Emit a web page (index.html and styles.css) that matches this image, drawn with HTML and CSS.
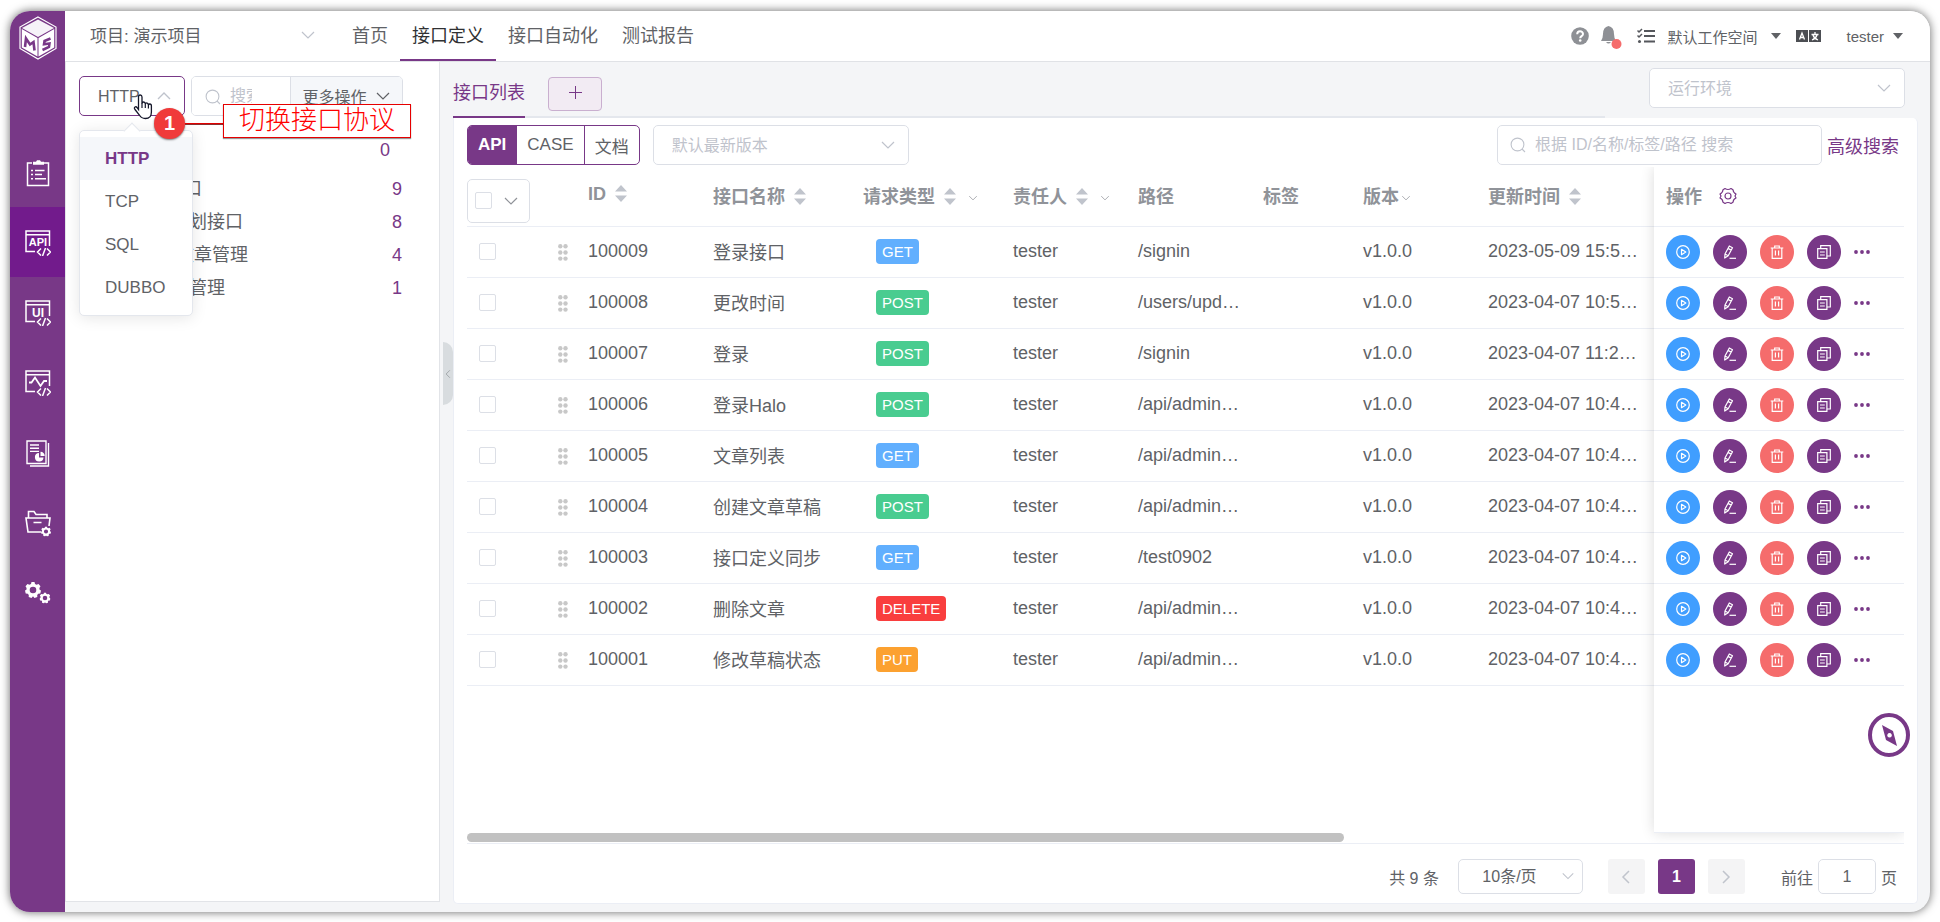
FILE: index.html
```html
<!DOCTYPE html>
<html lang="zh-CN">
<head>
    <meta charset="UTF-8">
    <meta name="viewport" content="width=device-width, initial-scale=1.0">
    <title>接口定义</title>
    <link rel="stylesheet" href="styles.css">
</head>
<body>
    <!-- Icon sprite -->
    <svg class="sprite" aria-hidden="true">
        <symbol id="i-down" viewBox="0 0 16 16"><path d="M2 5l6 6 6-6" fill="none" stroke="currentColor" stroke-width="1.2"/></symbol>
        <symbol id="i-up" viewBox="0 0 16 16"><path d="M2 11l6-6 6 6" fill="none" stroke="currentColor" stroke-width="1.4"/></symbol>
        <symbol id="i-left" viewBox="0 0 16 16"><path d="M11 2L5 8l6 6" fill="none" stroke="currentColor" stroke-width="1.5"/></symbol>
        <symbol id="i-right" viewBox="0 0 16 16"><path d="M5 2l6 6-6 6" fill="none" stroke="currentColor" stroke-width="1.5"/></symbol>
        <symbol id="i-search" viewBox="0 0 16 16"><g fill="none" stroke="currentColor" stroke-width="1.1"><circle cx="7.5" cy="7.5" r="6.4"/><path d="M12 12l3 3"/></g></symbol>
        <symbol id="i-sort" viewBox="0 0 12 17"><path d="M6 0l6 6.500H0zM6 17l6-6.500H0z" fill="currentColor"/></symbol>
        <symbol id="i-caret" viewBox="0 0 10 6"><path d="M0 0h10L5 6z" fill="currentColor"/></symbol>
        <symbol id="i-drag" viewBox="0 0 10 17"><g fill="currentColor"><circle cx="2.300" cy="2.300" r="2.200"/><circle cx="7.500" cy="2.300" r="2.200"/><circle cx="2.300" cy="8.500" r="2.200"/><circle cx="7.500" cy="8.500" r="2.200"/><circle cx="2.300" cy="14.600" r="2.200"/><circle cx="7.500" cy="14.600" r="2.200"/></g></symbol>
        <symbol id="i-play" viewBox="0 0 14 14"><g fill="none" stroke="currentColor" stroke-width="1.2"><circle cx="7" cy="7" r="6.300"/><path d="M5.500 4.300v5.400L9.800 7z" stroke-linejoin="round"/></g></symbol>
        <symbol id="i-edit" viewBox="0 0 14 14"><g fill="none" stroke="currentColor" stroke-width="1.2" stroke-linejoin="round"><path d="M6.300 1l3.200 1.700-4.300 8L1.700 13l.3-4zM5 3.400l3.200 1.700M2 9l3.200 1.700"/><path d="M6.500 13.300H13"/></g></symbol>
        <symbol id="i-trash" viewBox="0 0 14 14"><path d="M.7 3h12.600M4.700 3V1h4.600v2M2.200 3v10.300h9.600V3M5.400 5.500v5M8.600 5.500v5" fill="none" stroke="currentColor" stroke-width="1.200"/></symbol>
        <symbol id="i-copy" viewBox="0 0 14 14"><path d="M.7 3.700h9.200v9.600H.7zM3.700 3.500V.7h9.600V11h-3.200M3 7h4.800M3 10h4.800" fill="none" stroke="currentColor" stroke-width="1.200"/></symbol>
        <symbol id="i-more" viewBox="0 0 16 4"><g fill="currentColor"><circle cx="2" cy="2" r="1.900"/><circle cx="8" cy="2" r="1.900"/><circle cx="14" cy="2" r="1.900"/></g></symbol>
        <symbol id="i-setting" viewBox="0 0 18 18"><g fill="none" stroke="currentColor" stroke-width="1.200" stroke-linejoin="round"><path d="M6 1.500q3 2 6 0l2 1.300q.2 3 3 4.200l-1 2 1 2q-2.800 1.200-3 4.200l-2 1.300q-3-2-6 0l-2-1.300q-.2-3-3-4.200l1-2-1-2q2.800-1.200 3-4.200z"/><circle cx="9" cy="9" r="3"/></g></symbol>
        <symbol id="i-window" viewBox="0 0 26 26"><g fill="none" stroke="currentColor" stroke-width="1.500"><path d="M10 21.500H1V1h23.500v15M1 4.800h23.500"/><path d="M16 18.500L12.500 22l3.500 3.500M22 18.500l3.500 3.500-3.500 3.500M20.500 18l-3 8"/></g></symbol>
        <symbol id="i-gear" viewBox="0 0 16 16"><path d="M6.500 0h3l.5 2 1.600.7L13.500 2l2 2.300-1.100 1.800.2 1.600 1.400.9-.7 2.900-2.100.2-1 1.300.1 2-2.800 1L8 14.300 6.500 16l-2.800-1 .1-2-1-1.300-2.100-.2L0 8.600l1.400-.9.2-1.600L.5 4.300 2.500 2l1.900.7L6 2zM8 4.700A3.300 3.300 0 1 0 8 11.300 3.300 3.300 0 1 0 8 4.700z" fill="currentColor" fill-rule="evenodd"/></symbol>
    </svg>

    <div class="window">
        <nav class="sidebar" aria-label="主菜单">
            <a class="logo" href="#" aria-label="MS">
                <svg width="38" height="44" viewBox="0 0 38 44">
                    <path d="M19 1l18 10v21.500L19 43 1 32.500V11z" fill="none" stroke="#fff" stroke-width="1.200"/>
                    <path d="M19 3.500L35 12 19 21 3 12z" fill="#f6f3f8"/>
                    <path d="M2.800 13L18.500 22v18.500L2.800 31.500zM35.200 13L19.500 22v18.500l15.700-9z" fill="#fff"/>
                    <path d="M6 31l1-8.500 4 6 3.500-2.500 1 8.500" fill="none" stroke="#783887" stroke-width="2.600"/>
                    <path d="M31.500 22.500l-6 2.500-.5 3.200 5.500-.7-.5 3.500-6.500 3" fill="none" stroke="#783887" stroke-width="2.500"/>
                </svg>
            </a>
            <a class="side-item" href="#" aria-label="测试跟踪">
                <svg width="24" height="27" viewBox="0 0 24 27"><path d="M6 3H1.500v22.500h21V3H18M5 10.500h2M9 10.500h9.500M5 14.500h2M9 14.500h7M5 18.800h2M9 18.800h11" fill="none" stroke="currentColor" stroke-width="1.500"/><path d="M7 1.800h3l1-1.500h3l1 1.500h3v3H7z" fill="currentColor"/></svg>
            </a>
            <a class="side-item active" href="#" aria-label="接口测试">
                <svg width="26" height="27" viewBox="0 0 26 27"><use href="#i-window" width="26" height="26"/><text class="icon-text" x="13" y="16" font-size="11">API</text></svg>
            </a>
            <a class="side-item" href="#" aria-label="UI 测试">
                <svg width="26" height="27" viewBox="0 0 26 27"><use href="#i-window" width="26" height="26"/><text class="icon-text" x="13" y="17" font-size="12">UI</text></svg>
            </a>
            <a class="side-item" href="#" aria-label="性能测试">
                <svg width="26" height="27" viewBox="0 0 26 27"><use href="#i-window" width="26" height="26"/><path d="M4 12.500h2.500l3.500-5 5.500 8.500 3.500-5h3" fill="none" stroke="currentColor" stroke-width="1.800"/></svg>
            </a>
            <a class="side-item" href="#" aria-label="报告统计">
                <svg width="24" height="27" viewBox="0 0 24 27"><path d="M1 1h19v22.500H1zM22.500 3v23H4M4 5h9M4 8.200h9M4 11.400h9" fill="none" stroke="currentColor" stroke-width="1.400"/><path d="M13 13a4.300 4.300 0 1 0 4.500 4.500H13z" fill="currentColor"/><path d="M14.500 11.800v4.200h4.200a4.200 4.200 0 0 0-4.200-4.200z" fill="currentColor"/></svg>
            </a>
            <a class="side-item" href="#" aria-label="项目设置">
                <svg width="26" height="27" viewBox="0 0 26 27"><path d="M3.500 8V1.500h5.500l2 3h11V8M16 22H3L1 8h24l-1 8M8.500 12.500h8" fill="none" stroke="currentColor" stroke-width="1.600"/><use href="#i-gear" x="16" y="16.500" width="10" height="10"/></svg>
            </a>
            <a class="side-item" href="#" aria-label="系统设置">
                <svg width="26" height="22" viewBox="0 0 26 22"><use href="#i-gear" x="0" y="0" width="16" height="16"/><use href="#i-gear" x="14.500" y="10.500" width="11" height="11"/></svg>
            </a>
        </nav>

        <div class="main">
            <header class="header">
                <div class="select project-select">
                    <select aria-label="项目"><option>项目: 演示项目</option></select>
                    <svg class="arrow"><use href="#i-down"/></svg>
                </div>
                <nav class="nav">
                    <a href="#">首页</a>
                    <a href="#" class="active">接口定义</a>
                    <a href="#">接口自动化</a>
                    <a href="#">测试报告</a>
                </nav>
                <div class="header-tools">
                    <button class="icon-btn help" aria-label="帮助"><svg width="18" height="18" viewBox="0 0 18 18"><circle cx="9" cy="9" r="8.800" fill="#8e9095"/><path d="M6.200 7.200C6.200 3.300 12 3.500 12 7c0 2.200-2.800 2.100-2.800 4.200" fill="none" stroke="#fff" stroke-width="2"/><circle cx="9.200" cy="13.500" r="1.300" fill="#fff"/></svg></button>
                    <button class="icon-btn bell" aria-label="消息"><svg width="22" height="26" viewBox="0 0 22 26"><path d="M7.500 3q5.500 1 5.500 8 0 4 2 7H0q2-3 2-7 0-7 5.500-8zM5 19h5q-2.500 3-5 0" fill="#8e9095"/><circle cx="15.500" cy="21" r="5" fill="#f56c6c"/></svg></button>
                    <button class="icon-btn tasks" aria-label="任务"><svg width="18" height="16" viewBox="0 0 18 16"><path d="M7 3h11M7 8h11M7 13.500h11" stroke="#55575c" stroke-width="2"/><path d="M.5 2.500L2 4l3-3M.5 7.500L2 9l3-3" fill="none" stroke="#55575c" stroke-width="1.500"/><circle cx="2.500" cy="13.500" r="1.500" fill="#55575c"/></svg></button>
                    <button class="text-btn workspace">默认工作空间 <svg width="10" height="6"><use href="#i-caret"/></svg></button>
                    <button class="icon-btn lang" aria-label="语言"><svg width="25" height="14" viewBox="0 0 25 14"><path d="M0 1h12v12H0zM13 1h12v12H13z" fill="#4c4e53"/><path d="M3.500 10.500L6 4l2.500 6.500M4.500 8.500h3M19 3v2M15.500 5.500h7M17 6q1 3.500 5 5M21 6q-1 3.500-5 5" fill="none" stroke="#fff" stroke-width="1.300"/></svg></button>
                    <button class="text-btn user">tester <svg width="10" height="6"><use href="#i-caret"/></svg></button>
                </div>
            </header>

            <div class="body">
                <aside class="aside">
                    <div class="aside-bar">
                        <div class="select protocol">
                            <select aria-label="协议">
                                <option>HTTP</option>
                                <option>TCP</option>
                                <option>SQL</option>
                                <option>DUBBO</option>
                            </select>
                            <svg class="arrow"><use href="#i-up"/></svg>
                            <ul class="dropdown">
                                <li class="selected">HTTP</li>
                                <li>TCP</li>
                                <li>SQL</li>
                                <li>DUBBO</li>
                            </ul>
                            <svg class="pointer" width="20" height="26" viewBox="0 0 20 26"><path d="M5.500 15.500V3q0-2 1.700-2T9 3v6.500q.2-1.500 1.700-1.500t1.600 2q.3-1.200 1.500-1.200T15.400 11q.3-1 1.400-1 1.600 0 1.600 2v6q0 6.500-6 6.500-4 0-6-3.500L2 15.500q-1.200-1.800 0-2.500t2.300.8z" fill="#fff" stroke="#15172a" stroke-width="1.300"/><path d="M9 9v5M12.300 10v4M15.400 11v3.500" stroke="#15172a" stroke-width="1.200"/></svg>
                            <span class="step-badge">1</span>
                            <span class="step-line"></span>
                            <span class="step-note">切换接口协议</span>
                        </div>
                        <div class="search-group">
                            <svg class="search-icon"><use href="#i-search"/></svg>
                            <input type="text" placeholder="搜索" aria-label="搜索模块">
                            <button>更多操作 <svg class="icon"><use href="#i-down"/></svg></button>
                        </div>
                    </div>
                    <ul class="tree">
                        <li class="tree-total"><span></span><b>0</b></li>
                        <li class="level-1"><span>全部接口</span><b>9</b></li>
                        <li class="level-2"><span>未规划接口</span><b>8</b></li>
                        <li class="level-3"><span>文章管理</span><b>4</b></li>
                        <li class="level-2"><span>用户管理</span><b>1</b></li>
                    </ul>
                </aside>

                <section class="content">
                    <button class="splitter" aria-label="收起"><svg class="icon"><use href="#i-left"/></svg></button>
                    <div class="tabs-row">
                        <div class="tabs">
                            <a href="#" class="tab">接口列表</a>
                            <button class="add-tab" aria-label="新增"><svg width="13" height="13" viewBox="0 0 13 13"><path d="M6.500 0v13M0 6.500h13" stroke="currentColor"/></svg></button>
                        </div>
                        <div class="select env-select">
                            <select aria-label="运行环境" class="empty"><option>运行环境</option></select>
                            <svg class="arrow"><use href="#i-down"/></svg>
                        </div>
                    </div>

                    <div class="card">
                        <div class="toolbar">
                            <div class="view-switch">
                                <button class="on">API</button>
                                <button>CASE</button>
                                <button>文档</button>
                            </div>
                            <div class="select version-select">
                                <select aria-label="版本" class="empty"><option>默认最新版本</option></select>
                                <svg class="arrow"><use href="#i-down"/></svg>
                            </div>
                            <div class="search-box">
                                <svg class="search-icon"><use href="#i-search"/></svg>
                                <input type="text" placeholder="根据 ID/名称/标签/路径 搜索" aria-label="搜索接口">
                            </div>
                            <a href="#" class="advanced">高级搜索</a>
                        </div>

                        <div class="table-wrap">
                            <div class="table-area">
                                <div class="table-scroll">
                                    <table class="api-table">
                                        <colgroup>
                                            <col class="c-check"><col class="c-drag"><col class="c-id"><col class="c-name"><col class="c-type"><col class="c-owner"><col class="c-path"><col class="c-tag"><col class="c-version"><col class="c-time">
                                        </colgroup>
                                        <thead>
                                            <tr>
                                                <th class="check-head"><div class="check-all"><input type="checkbox" aria-label="全选"><svg class="icon"><use href="#i-down"/></svg></div></th>
                                                <th></th>
                                                <th>ID<svg class="sort"><use href="#i-sort"/></svg></th>
                                                <th>接口名称<svg class="sort"><use href="#i-sort"/></svg></th>
                                                <th>请求类型<svg class="sort"><use href="#i-sort"/></svg><svg class="filter"><use href="#i-down"/></svg></th>
                                                <th>责任人<svg class="sort"><use href="#i-sort"/></svg><svg class="filter"><use href="#i-down"/></svg></th>
                                                <th>路径</th>
                                                <th>标签</th>
                                                <th>版本<svg class="filter close"><use href="#i-down"/></svg></th>
                                                <th>更新时间<svg class="sort"><use href="#i-sort"/></svg></th>
                                            </tr>
                                        </thead>
                                        <tbody id="apiRows"></tbody>
                                    </table>
                                </div>
                                <div class="fixed-panel">
                                    <table class="api-table">
                                        <thead>
                                            <tr><th>操作<svg class="setting"><use href="#i-setting"/></svg></th></tr>
                                        </thead>
                                        <tbody id="actionRows"></tbody>
                                    </table>
                                </div>
                            </div>
                            <div class="scrollbar"><div class="thumb"></div></div>
                        </div>

                        <div class="pagination">
                            <span class="total">共 9 条</span>
                            <div class="select page-size">
                                <select aria-label="每页条数"><option>10条/页</option></select>
                                <svg class="arrow"><use href="#i-down"/></svg>
                            </div>
                            <button class="page" disabled aria-label="上一页"><svg class="icon"><use href="#i-left"/></svg></button>
                            <button class="page current">1</button>
                            <button class="page" disabled aria-label="下一页"><svg class="icon"><use href="#i-right"/></svg></button>
                            <label class="jump">前往 <input type="text" value="1"> 页</label>
                        </div>
                    </div>
                    <button class="compass" aria-label="新手引导"><svg width="42" height="44" viewBox="0 0 42 44"><ellipse cx="21" cy="22" rx="19" ry="20" fill="#fff" stroke="#783887" stroke-width="4"/><path d="M14 12l11 6 4 15-11-6zM21.500 20a2.300 2.300 0 1 0 .1 0z" fill="#783887" fill-rule="evenodd"/></svg></button>
                </section>
            </div>
        </div>
    </div>

    <script>
const apis = [
    { id: '100009', name: '登录接口', method: 'GET', path: '/signin', time: '2023-05-09 15:53:20' },
    { id: '100008', name: '更改时间', method: 'POST', path: '/users/update', time: '2023-04-07 10:52:10' },
    { id: '100007', name: '登录', method: 'POST', path: '/signin', time: '2023-04-07 11:22:10' },
    { id: '100006', name: '登录Halo', method: 'POST', path: '/api/admin/login', time: '2023-04-07 10:42:10' },
    { id: '100005', name: '文章列表', method: 'GET', path: '/api/admin/posts', time: '2023-04-07 10:42:10' },
    { id: '100004', name: '创建文章草稿', method: 'POST', path: '/api/admin/posts', time: '2023-04-07 10:42:10' },
    { id: '100003', name: '接口定义同步', method: 'GET', path: '/test0902', time: '2023-04-07 10:42:10' },
    { id: '100002', name: '删除文章', method: 'DELETE', path: '/api/admin/posts', time: '2023-04-07 10:42:10' },
    { id: '100001', name: '修改草稿状态', method: 'PUT', path: '/api/admin/posts', time: '2023-04-07 10:42:10' }
];

// Render the scrolling columns and the fixed action column
document.getElementById('apiRows').innerHTML = apis.map(api => `
    <tr>
        <td class="check-cell"><input type="checkbox" aria-label="选择 ${api.id}"></td>
        <td class="drag-cell"><svg class="drag"><use href="#i-drag"/></svg></td>
        <td>${api.id}</td>
        <td>${api.name}</td>
        <td><span class="method ${api.method.toLowerCase()}">${api.method}</span></td>
        <td>tester</td>
        <td>${api.path}</td>
        <td></td>
        <td>v1.0.0</td>
        <td>${api.time}</td>
    </tr>`).join('');

document.getElementById('actionRows').innerHTML = apis.map(() => `
    <tr>
        <td><div class="actions">
            <button class="round run" aria-label="执行"><svg><use href="#i-play"/></svg></button>
            <button class="round" aria-label="编辑"><svg><use href="#i-edit"/></svg></button>
            <button class="round remove" aria-label="删除"><svg><use href="#i-trash"/></svg></button>
            <button class="round" aria-label="复制"><svg><use href="#i-copy"/></svg></button>
            <button class="more" aria-label="更多"><svg><use href="#i-more"/></svg></button>
        </div></td>
    </tr>`).join('');
    </script>
</body>
</html>
```
FILE: styles.css
```css
* {
    box-sizing: border-box;
}

body {
    margin: 0;
    height: 100vh;
    padding: 11px 10px 10px;
    background: #fff;
    color: #606266;
    font-family: "Liberation Sans", "Noto Sans CJK SC", sans-serif;
    font-size: 18px;
}

button, input, select {
    font-family: inherit;
    color: inherit;
    margin: 0;
}

button {
    border: none;
    background: none;
    padding: 0;
    cursor: pointer;
}

a {
    color: inherit;
    text-decoration: none;
}

ul {
    list-style: none;
    margin: 0;
    padding: 0;
}

.sprite {
    display: none;
}

.icon {
    width: 16px;
    height: 16px;
}

/* Window frame */
.window {
    display: flex;
    height: 100%;
    border-radius: 20px;
    overflow: hidden;
    background: #f4f5f7;
    box-shadow: 0 0 10px rgba(0, 0, 0, 0.6);
}

.main {
    flex: 1;
    min-width: 0;
    display: flex;
    flex-direction: column;
}

/* Sidebar */
.sidebar {
    width: 55px;
    background: #783887;
    color: #fff;
}

.logo {
    display: flex;
    justify-content: center;
    height: 126px;
    padding-top: 5px;
}

.side-item {
    display: flex;
    align-items: center;
    justify-content: center;
    height: 70px;
    padding-top: 2px;
}

.side-item.active {
    background: #721b8c;
}

.icon-text {
    fill: #fff;
    font-weight: bold;
    text-anchor: middle;
}

/* Header */
.header {
    display: flex;
    height: 51px;
    background: #fff;
    border-bottom: 1px solid #e0e2e6;
}

/* Select boxes */
.select {
    position: relative;
    height: 40px;
}

.select select {
    appearance: none;
    width: 100%;
    height: 100%;
    padding: 0 18px;
    border: 1px solid #dcdfe6;
    border-radius: 5px;
    background: #fff;
    font-size: 16px;
}

.select select.empty {
    color: #bfc3cc;
}

.select .arrow {
    position: absolute;
    right: 13px;
    top: 12px;
    width: 16px;
    height: 16px;
    color: #bfc3cc;
    pointer-events: none;
}

.select.project-select {
    width: 264px;
    height: 50px;
    margin-right: 11px;
}

.project-select select {
    border: none;
    padding-left: 25px;
    font-size: 17px;
}

.project-select .arrow {
    top: 16px;
}

.nav {
    display: flex;
}

.nav a {
    padding: 0 12px;
    line-height: 50px;
}

.nav a.active {
    color: #303133;
    box-shadow: inset 0 -2px #783887;
}

.header-tools {
    display: flex;
    align-items: center;
    margin-left: auto;
    padding-right: 27px;
}

.icon-btn, .text-btn {
    display: flex;
    align-items: center;
}

.text-btn {
    gap: 14px;
    font-size: 15px;
}

.help {
    margin-right: 12px;
}

.tasks {
    margin: 0 12px 0 14px;
}

.lang {
    margin: 0 25px 0 15px;
}

.user {
    gap: 9px;
}

/* Module panel */
.body {
    flex: 1;
    display: flex;
    min-height: 0;
}

.aside {
    width: 375px;
    margin-bottom: 10px;
    padding: 14px 36px 0 13px;
    background: #fff;
    border: 1px solid #e2e4e8;
    border-top: none;
}

.aside-bar {
    display: flex;
    gap: 6px;
}

.protocol {
    width: 106px;
    z-index: 2;
}

.protocol select {
    border-color: #783887;
}

.search-group {
    position: relative;
    flex: 1;
    display: flex;
    height: 40px;
    border: 1px solid #dcdfe6;
    border-radius: 5px;
    overflow: hidden;
}

.search-group input {
    flex: 1;
    min-width: 0;
    padding: 0 38px;
    border: none;
    font-size: 16px;
}

.search-group button {
    display: flex;
    align-items: center;
    justify-content: center;
    gap: 8px;
    width: 112px;
    border-left: 1px solid #dcdfe6;
    background: #f5f7fa;
    font-size: 16px;
}

.search-icon {
    position: absolute;
    left: 13px;
    top: 12px;
    width: 16px;
    height: 16px;
    color: #bfc3cc;
}

input::placeholder {
    color: #bfc3cc;
}

/* Protocol dropdown */
.dropdown {
    position: absolute;
    left: 0;
    top: 54px;
    width: 114px;
    padding: 6px 0;
    background: #fff;
    border: 1px solid #e4e7ed;
    border-radius: 5px;
    box-shadow: 0 2px 15px rgba(0, 0, 0, 0.1);
    font-size: 17px;
}

.dropdown::before {
    content: "";
    position: absolute;
    left: 46px;
    top: -6px;
    width: 11px;
    height: 11px;
    background: #fff;
    border: 1px solid #e4e7ed;
    border-width: 1px 0 0 1px;
    transform: rotate(45deg);
}

.dropdown li {
    padding-left: 25px;
    line-height: 43px;
}

.dropdown .selected {
    position: relative;
    background: #f5f7fa;
    color: #783887;
    font-weight: bold;
}

/* Guide marks over the page */
.pointer {
    position: absolute;
    left: 54px;
    top: 18px;
}

.step-badge {
    position: absolute;
    left: 75px;
    top: 32px;
    width: 31px;
    height: 31px;
    border-radius: 50%;
    background: #f03a3a;
    color: #fff;
    font-size: 20px;
    font-weight: bold;
    line-height: 31px;
    text-align: center;
    box-shadow: 0 1px 2px rgba(0, 0, 0, 0.5);
}

.step-line {
    position: absolute;
    left: 106px;
    top: 47px;
    width: 38px;
    height: 1px;
    background: #e00000;
    box-shadow: 0 1px #8c3030;
}

.step-note {
    position: absolute;
    left: 144px;
    top: 28px;
    width: 188px;
    height: 34px;
    border: 1px solid #e60000;
    background: #fff;
    color: #f00;
    font-size: 26px;
    font-weight: 300;
    line-height: 30px;
    text-align: center;
    box-shadow: 0 1px 1px rgba(0, 0, 0, 0.4);
}

/* Module tree */
.tree {
    margin-top: 18px;
}

.tree li {
    display: flex;
    justify-content: space-between;
    line-height: 33px;
    padding-right: 1px;
}

.tree b {
    color: #783887;
    font-weight: normal;
}

.tree .tree-total {
    padding-right: 13px;
    margin-bottom: 6px;
}

.level-1 {
    padding-left: 51px;
}

.level-2 {
    padding-left: 74px;
}

.level-3 {
    padding-left: 97px;
}

/* Content */
.content {
    position: relative;
    flex: 1;
    min-width: 0;
    display: flex;
    flex-direction: column;
    padding: 0 12px 8px 13px;
}

.splitter {
    position: absolute;
    left: 3px;
    top: 280px;
    width: 10px;
    height: 63px;
    border-radius: 0 10px 10px 0;
    background: #d8dcdf;
    color: #a0a4a8;
}

.splitter .icon {
    display: block;
    width: 10px;
    height: 16px;
}

.tabs-row {
    display: flex;
    height: 56px;
}

.tabs {
    flex: 1;
    display: flex;
    align-items: flex-start;
    gap: 23px;
    border-bottom: 2px solid #e4e7ed;
}

.tab {
    height: 56px;
    line-height: 62px;
    border-bottom: 2px solid #783887;
    color: #783887;
}

.add-tab {
    width: 54px;
    height: 34px;
    margin-top: 15px;
    border: 1px solid #c9afcf;
    border-radius: 4px;
    background: #f2ebf3;
    color: #783887;
}

.env-select {
    width: 256px;
    margin: 6px 13px 0 44px;
}

.card {
    flex: 1;
    min-height: 0;
    display: flex;
    flex-direction: column;
    padding: 7px 13px 9px;
    background: #fff;
    border: 1px solid #ebeef5;
    border-top: none;
    border-radius: 0 5px 5px 5px;
}

.toolbar {
    display: flex;
    align-items: center;
    margin-bottom: 2px;
}

.view-switch {
    display: flex;
    height: 40px;
    border: 1px solid #783887;
    border-radius: 5px;
    overflow: hidden;
}

.view-switch button {
    padding: 0 10px;
    font-size: 17px;
}

.view-switch button + button {
    border-left: 1px solid #783887;
}

.view-switch .on {
    background: #783887;
    color: #fff;
    font-weight: bold;
}

.version-select {
    width: 256px;
    margin-left: 13px;
}

.search-box {
    position: relative;
    width: 325px;
    height: 40px;
    margin-left: auto;
}

.search-box input {
    width: 100%;
    height: 100%;
    padding: 0 37px;
    border: 1px solid #dcdfe6;
    border-radius: 5px;
    font-size: 16px;
}

.advanced {
    margin: 0 5px;
    color: #783887;
}

/* API table */
.table-wrap {
    flex: 1;
    min-height: 0;
    display: flex;
    flex-direction: column;
    overflow: hidden;
    border-bottom: 1px solid #ebeef5;
}

.table-area {
    flex: 1;
    display: flex;
}

.table-scroll {
    flex: 1;
    min-width: 0;
    overflow: hidden;
}

.fixed-panel {
    width: 250px;
    background: #fff;
    border-bottom: 1px solid #ebeef5;
    box-shadow: 0 0 13px rgba(0, 0, 0, 0.14);
    z-index: 1;
}

.api-table {
    width: 100%;
    table-layout: fixed;
    border-collapse: separate;
    border-spacing: 0;
}

.c-check { width: 83px; }
.c-drag { width: 26px; }
.c-id, .c-owner, .c-path, .c-version { width: 125px; }
.c-name, .c-type { width: 150px; }
.c-tag { width: 100px; }

.api-table th, .api-table td {
    padding: 0 8px 0 12px;
    border-bottom: 1px solid #ebeef5;
    text-align: left;
    white-space: nowrap;
    overflow: hidden;
    text-overflow: ellipsis;
}

.api-table th {
    height: 60px;
    padding-right: 0;
    padding-bottom: 4px;
    color: #909399;
}

.api-table td {
    height: 51px;
}

.table-scroll td {
    padding-bottom: 2px;
}

.api-table .check-head {
    padding: 8px 0 0;
}

.check-all {
    display: flex;
    align-items: center;
    gap: 11px;
    width: 63px;
    height: 44px;
    padding-left: 7px;
    border: 1px solid #dcdfe6;
    border-radius: 5px;
}

.api-table input {
    display: block;
    appearance: none;
    width: 17px;
    height: 17px;
    border: 1px solid #dcdfe6;
    border-radius: 2px;
    background: #fff;
}

.api-table .drag-cell {
    padding: 0 8px;
}

.drag {
    display: block;
    width: 10px;
    height: 17px;
    color: #c8c8c8;
}

.sort {
    width: 12px;
    height: 17px;
    margin-left: 9px;
    vertical-align: -2px;
    color: #c0c4cc;
}

.filter {
    width: 10px;
    height: 10px;
    margin-left: 12px;
}

.filter.close {
    margin-left: 2px;
}

.setting {
    width: 18px;
    height: 18px;
    margin-left: 17px;
    vertical-align: -2px;
    color: #783887;
}

.method {
    display: inline-block;
    margin-left: 13px;
    padding: 0 6px;
    border-radius: 4px;
    color: #fff;
    font-size: 15px;
    line-height: 25px;
    vertical-align: middle;
}

.get { background: #61affe; }
.post { background: #49cc90; }
.delete { background: #f93e3e; }
.put { background: #fca130; }

.actions {
    display: flex;
    align-items: center;
    gap: 13px;
}

.round {
    display: flex;
    align-items: center;
    justify-content: center;
    width: 34px;
    height: 34px;
    border-radius: 50%;
    background: #783887;
    color: #fff;
}

.round svg {
    width: 14px;
    height: 14px;
}

.run { background: #409eff; }
.remove { background: #f56c6c; }

.more {
    display: flex;
    color: #783887;
}

.more svg {
    width: 16px;
    height: 4px;
}

.scrollbar {
    height: 10px;
}

.thumb {
    width: 61%;
    height: 9px;
    border-radius: 5px;
    background: #c1c1c1;
}

/* Pagination */
.pagination {
    display: flex;
    align-items: center;
    justify-content: flex-end;
    gap: 13px;
    padding-top: 15px;
    padding-right: 7px;
    font-size: 16px;
}

.total {
    margin-right: 6px;
}

.select.page-size {
    width: 125px;
    height: 35px;
    margin-right: 12px;
}

.page-size select {
    padding: 0 30px 0 8px;
    text-align-last: center;
}

.page-size .arrow {
    right: 8px;
    top: 10px;
    width: 14px;
    height: 14px;
}

.page {
    display: flex;
    align-items: center;
    justify-content: center;
    width: 37px;
    height: 35px;
    border-radius: 3px;
    background: #f4f4f5;
    color: #c0c4cc;
    font-size: 16px;
}

.page.current {
    background: #783887;
    color: #fff;
    font-weight: bold;
}

.jump {
    display: flex;
    align-items: center;
    gap: 5px;
    margin-left: 23px;
}

.jump input {
    width: 58px;
    height: 35px;
    border: 1px solid #dcdfe6;
    border-radius: 5px;
    font-size: 16px;
    text-align: center;
}

.compass {
    position: absolute;
    right: 20px;
    bottom: 155px;
    z-index: 3;
    line-height: 0;
}
```
